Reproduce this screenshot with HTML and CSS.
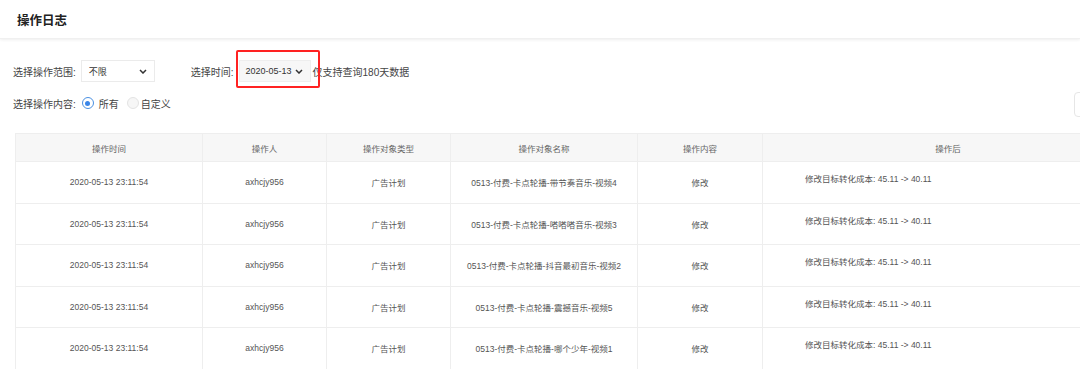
FILE: index.html
```html
<!DOCTYPE html>
<html lang="zh">

<head>
    <meta charset="UTF-8">
    <meta name="viewport" content="width=device-width, initial-scale=1.0">
    <title>操作日志</title>
    <link rel="stylesheet" href="styles.css">
</head>

<body>
    <div class="header">
        <h1>操作日志</h1>
    </div>
    <div class="main">
        <div class="filter-row">
            <span class="label">选择操作范围:</span>
            <div class="select">
                <span>不限</span>
                <svg class="arrow" width="8" height="5" viewBox="0 0 8 5"><path d="M1 1l3 3 3-3" fill="none" stroke="#333" stroke-width="1.5"/></svg>
            </div>
            <span class="label time-label">选择时间:</span>
            <div class="mark">
                <div class="select date">
                    <span>2020-05-13</span>
                    <svg class="arrow" width="8" height="5" viewBox="0 0 8 5"><path d="M1 1l3 3 3-3" fill="none" stroke="#333" stroke-width="1.5"/></svg>
                </div>
            </div>
            <span class="tip">仅支持查询180天数据</span>
        </div>
        <div class="filter-row second">
            <span class="label">选择操作内容:</span>
            <label class="radio checked"><i></i>所有</label>
            <label class="radio"><i></i>自定义</label>
            <div class="btn"></div>
        </div>

        <table class="log">
            <colgroup>
                <col style="width:187px">
                <col style="width:124px">
                <col style="width:124px">
                <col style="width:187px">
                <col style="width:125px">
                <col>
            </colgroup>
            <thead>
                <tr>
                    <th>操作时间</th>
                    <th>操作人</th>
                    <th>操作对象类型</th>
                    <th>操作对象名称</th>
                    <th>操作内容</th>
                    <th>操作后</th>
                </tr>
            </thead>
            <tbody id="rows"></tbody>
        </table>
    </div>
    <script>
        var names = [
            "0513-付费-卡点轮播-带节奏音乐-视频4",
            "0513-付费-卡点轮播-嗒嗒嗒音乐-视频3",
            "0513-付费-卡点轮播-抖音最初音乐-视频2",
            "0513-付费-卡点轮播-震撼音乐-视频5",
            "0513-付费-卡点轮播-哪个少年-视频1"
        ]
        var tbody = document.getElementById("rows")
        names.forEach(function (n) {
            var tr = document.createElement("tr")
            tr.innerHTML = "<td>2020-05-13 23:11:54</td>" +
                "<td>axhcjy956</td>" +
                "<td>广告计划</td>" +
                "<td>" + n + "</td>" +
                "<td>修改</td>" +
                "<td class=\"after\">修改目标转化成本: 45.11 -&gt; 40.11</td>"
            tbody.appendChild(tr)
        })
    </script>
</body>

</html>
```

FILE: styles.css
```css
html,
body {
    margin: 0;
    background: #fff;
    overflow: hidden;
}

body {
    font-family: "Liberation Sans", "Noto Sans CJK SC", sans-serif;
    color: #333;
}

.header {
    height: 38px;
    display: flex;
    align-items: center;
    padding-left: 17px;
    box-shadow: 0 1px 3px rgba(0, 0, 0, 0.07);
    border-bottom: 1px solid #f0f0f0;
}

.header h1 {
    margin: 0;
    font-size: 12.5px;
    font-weight: bold;
    color: #222;
}

.main {
    width: 1150px;
    box-sizing: border-box;
    padding: 0 13px;
}

.filter-row {
    display: flex;
    align-items: center;
    height: 22px;
    margin-top: 21px;
    font-size: 10px;
}

.filter-row.second {
    margin-top: 10px;
}

.label {
    color: #444;
    margin-right: 5px;
}

.time-label {
    margin-left: 36px;
    margin-right: 5px;
}

.select {
    width: 74px;
    height: 22px;
    box-sizing: border-box;
    border: 1px solid #ebebeb;
    display: flex;
    justify-content: space-between;
    padding: 0 7px 0 7px;
    font-size: 9px;
    color: #333;
}

.select span {
    padding-top: 4px;
}

.select .arrow {
    align-self: center;
}

.select.date {
    width: 72px;
    background: #f7f7f7;
    border-color: #eee;
    padding: 0 7px 0 6px;
}

.select.date span {
    padding-top: 0;
    align-self: center;
}

.mark {
    position: relative;
}

.mark::after {
    content: "";
    position: absolute;
    top: -10px;
    bottom: -6px;
    left: -3px;
    right: -9px;
    border: 2px solid #f22;
    border-radius: 2px;
}

.tip {
    margin-left: 2px;
    color: #444;
}

.radio {
    display: flex;
    align-items: center;
    color: #444;
    margin-right: 3px;
}

.radio i {
    width: 10px;
    height: 10px;
    border-radius: 50%;
    border: 1px solid #e3e3e3;
    background: #f6f6f6;
    margin: 0 2px 0 0;
    box-sizing: content-box;
}

.radio.checked {
    margin-right: 8px;
}

.radio.checked i {
    border-color: #4a90e2;
    background: #fff;
    position: relative;
    margin: 0 5px 0 1px;
}

.radio.checked i::after {
    content: "";
    position: absolute;
    left: 2.5px;
    top: 2.5px;
    width: 5px;
    height: 5px;
    border-radius: 50%;
    background: #3a86e8;
}

.btn {
    margin-left: auto;
    width: 63px;
    height: 25px;
    box-sizing: border-box;
    border: 1px solid #e6e6e6;
    border-radius: 4px;
    margin-top: 2px;
}

.log {
    margin: 19px 0 0 2px;
    width: 1119px;
    table-layout: fixed;
    border-collapse: collapse;
    font-size: 8.5px;
    color: #555;
}

.log th,
.log td {
    border: 1px solid #eee;
    text-align: center;
    padding: 0;
}

.log th {
    height: 27px;
    background: #f7f7f7;
    font-weight: normal;
    color: #666;
}

.log td {
    height: 40.5px;
}

.log td.after {
    text-align: left;
    vertical-align: top;
    padding: 10px 0 0 42px;
    height: 30.5px;
}
```
